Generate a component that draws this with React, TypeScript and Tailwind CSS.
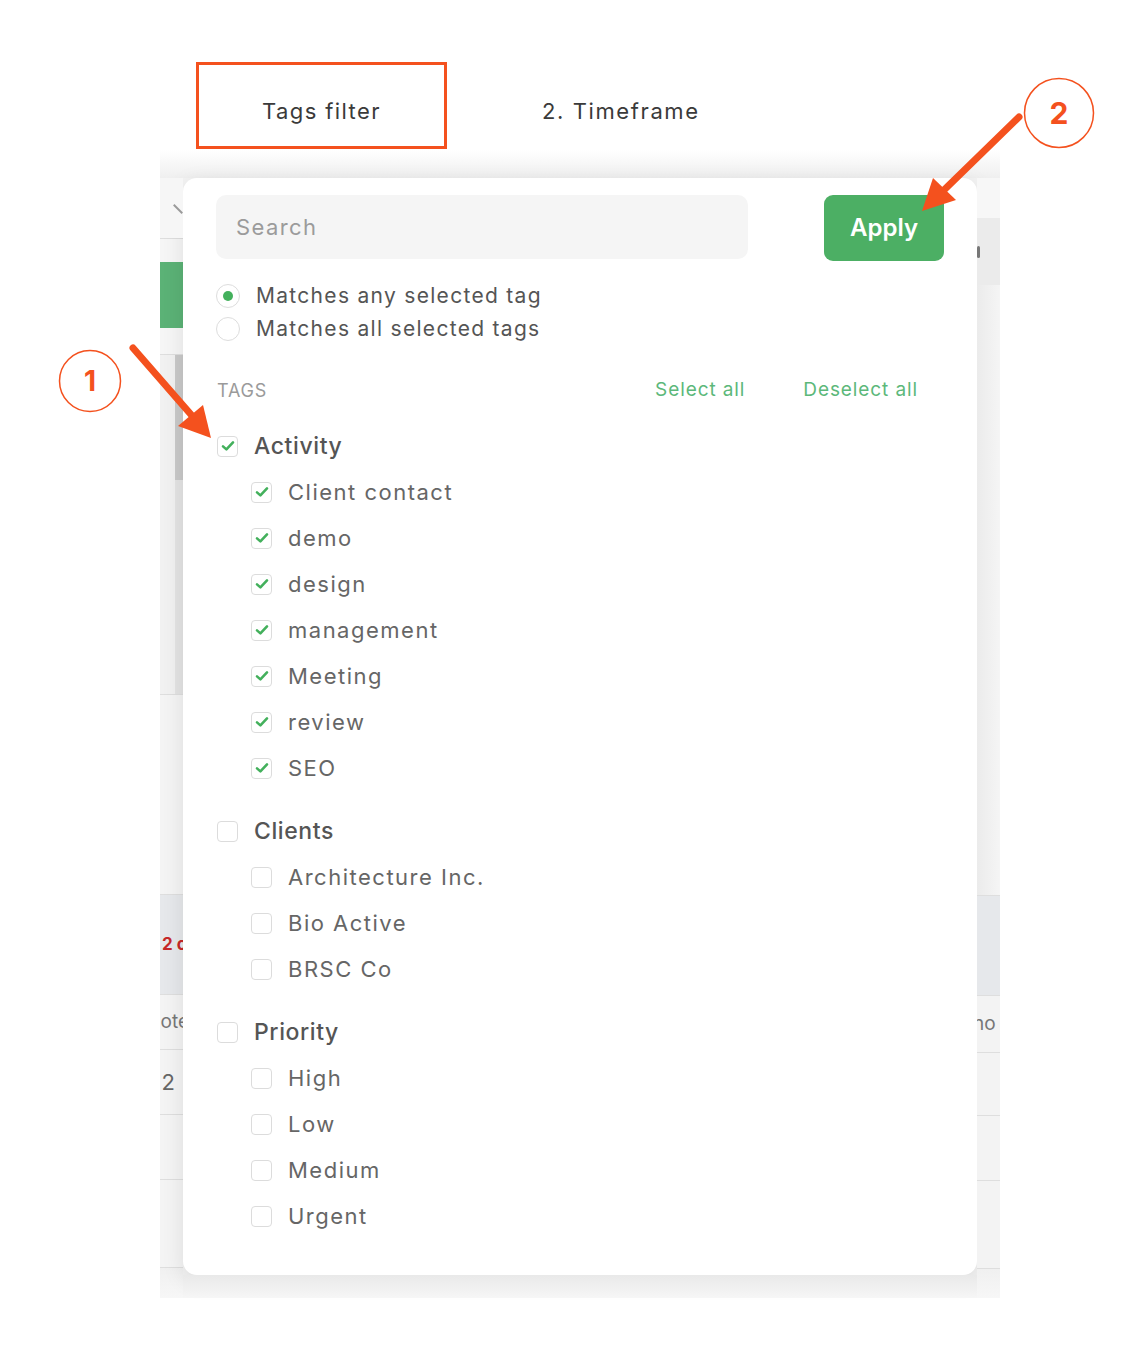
import React from "react"

const FONT = { fontFamily: "Inter, 'Noto Sans', 'Liberation Sans', sans-serif" }

const GROUPS = [
  {
    name: "Activity",
    checked: true,
    items: ["Client contact", "demo", "design", "management", "Meeting", "review", "SEO"],
  },
  { name: "Clients", checked: false, items: ["Architecture Inc.", "Bio Active", "BRSC Co"] },
  { name: "Priority", checked: false, items: ["High", "Low", "Medium", "Urgent"] },
]

function Check({ on }: { on: boolean }) {
  return (
    <span className="flex h-[21px] w-[21px] flex-none items-center justify-center rounded-[4px] border-[1.5px] border-[#dcdcdc] bg-white">
      {on && (
        <svg width="16" height="16" viewBox="0 0 16 16" fill="none">
          <path d="M3 8.4 L6.4 11.4 L13 4.4" stroke="#43b05c" strokeWidth="2.6" strokeLinecap="round" strokeLinejoin="round" />
        </svg>
      )}
    </span>
  )
}

function Radio({ on, label }: { on: boolean; label: string }) {
  return (
    <div className="flex h-[33px] items-center gap-[16px]">
      <span className="flex h-[24px] w-[24px] flex-none items-center justify-center rounded-full border-[1.5px] border-[#dddddd] bg-white">
        {on && <span className="h-[10px] w-[10px] rounded-full bg-[#43b05c]" />}
      </span>
      <span className="text-[21px] tracking-[1.3px] text-[#555555]">{label}</span>
    </div>
  )
}

// background table edge peeking out at the sides of the popup
function Line() {
  return <div className="h-px bg-[#dedede]" />
}

function LeftStrip() {
  return (
    <div className="flex flex-col overflow-hidden bg-[#f4f4f4]">
      <div className="relative h-[60px] bg-[#f6f6f6]">
        <div className="absolute left-[12px] top-[30px] h-[2px] w-[12px] rotate-45 bg-[#9a9a9a]" />
      </div>
      <Line />
      <div className="h-[23px] bg-[#f6f6f6]" />
      <div className="h-[66px] bg-[#5bb276]" />
      <div className="h-[26px] bg-[#f6f6f6]" />
      <Line />
      <div className="flex h-[339px] justify-end bg-[#f1f1f1]">
        <div className="flex w-[8px] flex-col bg-[#e4e4e4]">
          <div className="h-[125px] bg-[#c9c9c9]" />
        </div>
      </div>
      <Line />
      <div className="h-[199px] bg-[#f4f4f4]" />
      <Line />
      <div className="flex h-[99px] items-center bg-[#e6e8eb] pl-[2px]">
        <span className="whitespace-nowrap text-[17px] font-bold text-[#c62828]">2 c</span>
      </div>
      <Line />
      <div className="flex h-[54px] items-center justify-end bg-[#f4f4f4]">
        <span className="-mr-[6px] whitespace-nowrap text-[19px] text-[#777777]">ote</span>
      </div>
      <Line />
      <div className="flex h-[64px] items-center justify-end bg-[#f4f4f4]">
        <span className="mr-[8px] whitespace-nowrap text-[22px] text-[#666666]">2</span>
      </div>
      <Line />
      <div className="h-[64px] bg-[#f4f4f4]" />
      <Line />
      <div className="h-[87px] bg-[#f4f4f4]" />
      <Line />
      <div className="flex-1 bg-gradient-to-b from-[#f0f0f0] to-[#f7f7f7]" />
    </div>
  )
}

function RightStrip() {
  return (
    <div className="flex flex-col overflow-hidden bg-[#f3f3f3]">
      <div className="h-[40px] bg-[#f7f7f7]" />
      <div className="flex h-[67px] items-center bg-[#ebebeb]">
        <div className="h-[12px] w-[3px] rounded-full bg-[#777777]" />
      </div>
      <div className="h-[610px] bg-gradient-to-r from-[#ebebeb] to-[#f5f5f5]" />
      <Line />
      <div className="h-[99px] bg-[#e6e8eb]" />
      <Line />
      <div className="flex h-[56px] items-center bg-[#f3f3f3]">
        <span className="-ml-[4px] whitespace-nowrap text-[19px] text-[#777777]">no</span>
      </div>
      <Line />
      <div className="h-[62px] bg-[#f3f3f3]" />
      <Line />
      <div className="h-[64px] bg-[#f3f3f3]" />
      <Line />
      <div className="h-[87px] bg-[#f3f3f3]" />
      <Line />
      <div className="flex-1 bg-gradient-to-b from-[#f0f0f0] to-[#f7f7f7]" />
    </div>
  )
}

function Popup() {
  return (
    <div className="flex h-[1097px] flex-col rounded-[14px] bg-white px-[33px] pt-[17px] shadow-[0_6px_22px_rgba(0,0,0,0.10)]">
      <div className="flex items-start justify-between">
        <div className="flex h-[64px] w-[532px] items-center rounded-[10px] bg-[#f5f5f5] pl-[20px] text-[22px] tracking-[1.4px] text-[#9b9b9b]">
          Search
        </div>
        <button className="flex h-[66px] w-[120px] items-center justify-center rounded-[9px] bg-[#4caf64] text-[24px] font-semibold text-white">
          Apply
        </button>
      </div>

      <div className="mt-[18px] flex flex-col">
        <Radio on label="Matches any selected tag" />
        <Radio on={false} label="Matches all selected tags" />
      </div>

      <div className="mt-[33px] flex h-[24px] items-center pl-[1px] pr-[26px]">
        <span className="text-[18px] uppercase tracking-[0.8px] text-[#9a9a9a]">Tags</span>
        <span className="ml-auto text-[19px] tracking-[0.9px] text-[#5cb87a]">Select all</span>
        <span className="ml-[58px] text-[19px] tracking-[0.9px] text-[#5cb87a]">Deselect all</span>
      </div>

      <div className="mt-[21px] flex flex-col gap-[17px] pl-[1px]">
        {GROUPS.map((g) => (
          <div key={g.name} className="flex flex-col">
            <div className="flex h-[46px] items-center gap-[16px]">
              <Check on={g.checked} />
              <span className="text-[23px] font-medium tracking-[0.6px] text-[#555555]">{g.name}</span>
            </div>
            {g.items.map((it) => (
              <div key={it} className="flex h-[46px] items-center gap-[16px] pl-[34px]">
                <Check on={g.checked} />
                <span className="text-[22px] tracking-[1.5px] text-[#666666]">{it}</span>
              </div>
            ))}
          </div>
        ))}
      </div>
    </div>
  )
}

function Annotations() {
  const orange = "#f4511e"
  return (
    <svg className="pointer-events-none absolute left-0 top-0" width="1125" height="1350" viewBox="0 0 1125 1350">
      <circle cx="90" cy="381" r="30.5" fill="white" stroke={orange} strokeWidth="1.5" />
      <text x="90" y="391" textAnchor="middle" fontSize="28" fontWeight="700" fill={orange} fontFamily="Inter, sans-serif">1</text>
      <line x1="133" y1="348" x2="194" y2="418" stroke={orange} strokeWidth="7" strokeLinecap="round" />
      <polygon points="211,438 178,426 203,405" fill={orange} />

      <circle cx="1059" cy="113" r="34.5" fill="white" stroke={orange} strokeWidth="1.5" />
      <text x="1059" y="124" textAnchor="middle" fontSize="30" fontWeight="700" fill={orange} fontFamily="Inter, sans-serif">2</text>
      <line x1="1019" y1="117" x2="944" y2="190" stroke={orange} strokeWidth="7" strokeLinecap="round" />
      <polygon points="922,211 933,178 956,200" fill={orange} />
    </svg>
  )
}

export default function App() {
  return (
    <div className="relative h-[1350px] w-[1125px] overflow-hidden bg-white" style={FONT}>
      <div className="flex h-[150px] items-end pb-[1px] pl-[196px]">
        <div className="flex h-[87px] w-[251px] items-center justify-center border-[3px] border-[#f4511e] pt-[12px] text-[22px] tracking-[1.4px] text-[#3a3a3a]">
          Tags filter
        </div>
        <div className="ml-[95px] flex h-[87px] items-center pt-[12px] text-[22px] tracking-[1.6px] text-[#3a3a3a]">
          2. Timeframe
        </div>
      </div>

      <div className="ml-[160px] w-[840px]">
        <div className="h-[28px] bg-gradient-to-b from-white to-[#efefef]" />
        <div className="grid h-[1120px] grid-cols-[23px_794px_23px]">
          <LeftStrip />
          <div className="flex flex-col bg-[#f3f3f3]">
            <Popup />
            <div className="flex-1 bg-gradient-to-b from-[#e9e9e9] to-[#f6f6f6]" />
          </div>
          <RightStrip />
        </div>
      </div>

      <Annotations />
    </div>
  )
}
